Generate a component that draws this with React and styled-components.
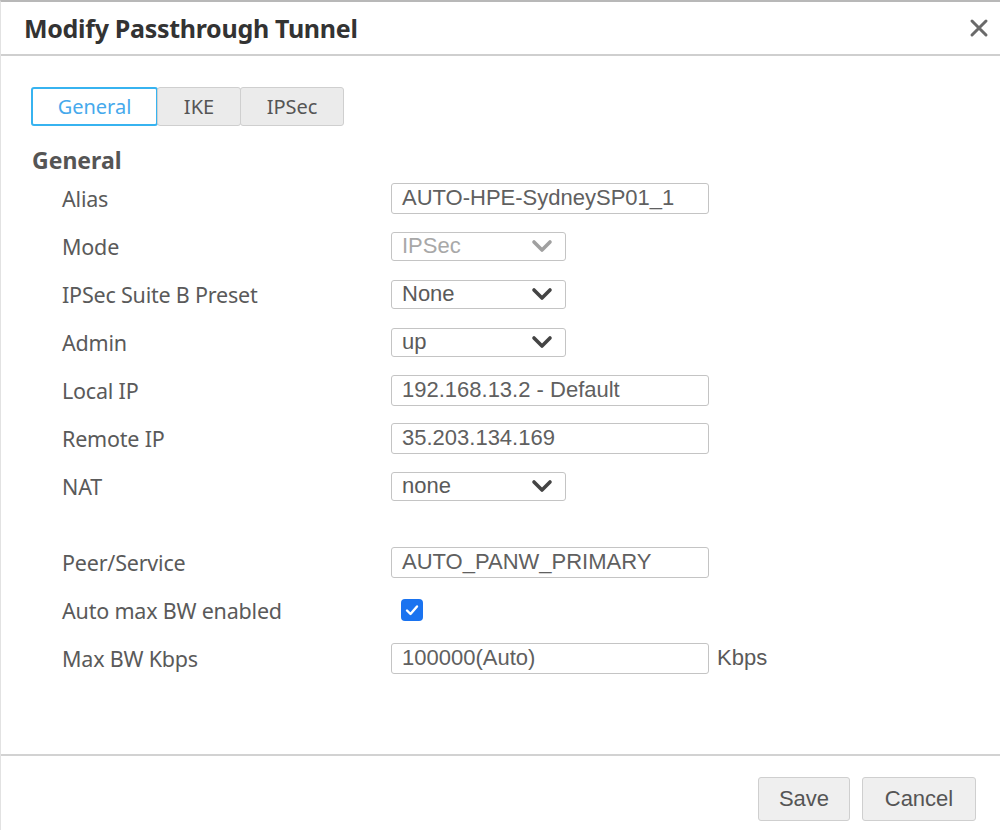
import React from 'react';
import styled, { createGlobalStyle } from 'styled-components';

const GlobalStyle = createGlobalStyle`
  html, body {
    margin: 0;
    padding: 0;
    background: #fff;
  }
`;

const Dialog = styled.div`
  width: 1000px;
  height: 830px;
  box-sizing: border-box;
  border-top: 2px solid #b8b8b8;
  border-left: 1px solid #e2e2e2;
  display: flex;
  flex-direction: column;
  font-family: 'Noto Sans', 'DejaVu Sans', sans-serif;
  color: #555;
`;

const Header = styled.div`
  height: 52px;
  display: flex;
  align-items: center;
  justify-content: space-between;
  padding: 0 9px 0 23px;
  border-bottom: 2px solid #cfcfcf;
`;

const Title = styled.h1`
  margin: 0;
  font-size: 25px;
  font-weight: bold;
  color: #333;
  letter-spacing: -0.3px;
`;

const Close = styled.button`
  border: 0;
  background: none;
  padding: 0;
  width: 24px;
  height: 24px;
  display: flex;
  align-items: center;
  justify-content: center;
  cursor: pointer;
`;

const Body = styled.div`
  flex: 1;
  padding: 31px 0 0 30px;
  border-bottom: 2px solid #d2d2d2;
`;

const Tabs = styled.div`
  display: flex;
`;

const Tab = styled.button`
  height: 39px;
  box-sizing: border-box;
  padding: 0;
  width: ${p => p.$w}px;
  font-family: 'Noto Sans', 'DejaVu Sans', sans-serif;
  font-size: 20px;
  background: ${p => (p.$active ? '#fff' : '#ebebeb')};
  color: ${p => (p.$active ? '#46a9ec' : '#555')};
  border: ${p => (p.$active ? '2px solid #37b3f0' : '1px solid #cfcfcf')};
  border-radius: 3px;
  margin-left: ${p => (p.$active ? 0 : -1)}px;
`;

const SectionTitle = styled.h2`
  margin: 20px 0 0 1px;
  font-size: 23px;
  line-height: 28px;
  font-weight: bold;
  color: #555;
`;

const Form = styled.div`
  padding-left: 31px;
  display: grid;
  grid-template-columns: 329px 1fr;
`;

const Label = styled.div`
  height: 48px;
  display: flex;
  align-items: center;
  font-size: 21.5px;
  color: #5a5a5a;
  letter-spacing: -0.2px;
`;

const Field = styled.div`
  display: flex;
  align-items: center;
  gap: 8px;
`;

const Spacer = styled.div`
  grid-column: 1 / -1;
  height: 28px;
`;

const TextInput = styled.div`
  width: 318px;
  height: 31px;
  box-sizing: border-box;
  border: 1px solid #c4c4c4;
  border-radius: 3px;
  padding: 0 10px;
  display: flex;
  align-items: center;
  font-family: 'Liberation Sans', Arial, sans-serif;
  font-size: 22px;
  color: #606060;
  white-space: nowrap;
`;

const Select = styled.div`
  width: 175px;
  height: 29px;
  box-sizing: border-box;
  border: 1px solid #c4c4c4;
  border-radius: 3px;
  padding: 0 12px 0 10px;
  display: flex;
  align-items: center;
  justify-content: space-between;
  font-family: 'Liberation Sans', Arial, sans-serif;
  font-size: 22px;
  color: ${p => (p.$disabled ? '#a8a8a8' : '#5a5a5a')};
`;

const Check = styled.div`
  margin-left: 10px;
  width: 22px;
  height: 22px;
  border-radius: 4px;
  background: #1a73f0;
  display: flex;
  align-items: center;
  justify-content: center;
`;

const Unit = styled.span`
  font-family: 'Liberation Sans', Arial, sans-serif;
  font-size: 22px;
  color: #5a5a5a;
`;

const Footer = styled.div`
  height: 74px;
  display: flex;
  justify-content: flex-end;
  align-items: flex-start;
  gap: 12px;
  padding: 21px 24px 0 0;
  box-sizing: border-box;
`;

const Button = styled.button`
  height: 44px;
  width: ${p => p.$w}px;
  background: #efefef;
  border: 1px solid #cfcfcf;
  border-radius: 3px;
  font-family: 'Liberation Sans', Arial, sans-serif;
  font-size: 22px;
  color: #555;
`;

const Chevron = ({ color }) => (
  <svg width="22" height="14" viewBox="0 0 22 14">
    <path d="M3 3 L11 11 L19 3" fill="none" stroke={color} strokeWidth="3.6" strokeLinecap="round" strokeLinejoin="round" />
  </svg>
);

const rows = [
  { label: 'Alias', type: 'text', value: 'AUTO-HPE-SydneySP01_1' },
  { label: 'Mode', type: 'select', value: 'IPSec', disabled: true },
  { label: 'IPSec Suite B Preset', type: 'select', value: 'None' },
  { label: 'Admin', type: 'select', value: 'up' },
  { label: 'Local IP', type: 'text', value: '192.168.13.2 - Default' },
  { label: 'Remote IP', type: 'text', value: '35.203.134.169' },
  { label: 'NAT', type: 'select', value: 'none' },
  { spacer: true },
  { label: 'Peer/Service', type: 'text', value: 'AUTO_PANW_PRIMARY' },
  { label: 'Auto max BW enabled', type: 'check' },
  { label: 'Max BW Kbps', type: 'text', value: '100000(Auto)', unit: 'Kbps' },
];

function renderField(r) {
  if (r.type === 'select') {
    return (
      <Select $disabled={r.disabled}>
        {r.value}
        <Chevron color={r.disabled ? '#a0a0a0' : '#444'} />
      </Select>
    );
  }
  if (r.type === 'check') {
    return (
      <Check>
        <svg width="16" height="16" viewBox="0 0 16 16">
          <path d="M3 8.5 L6.5 12 L13 4.5" fill="none" stroke="#fff" strokeWidth="2.4" strokeLinecap="round" strokeLinejoin="round" />
        </svg>
      </Check>
    );
  }
  return (
    <>
      <TextInput>{r.value}</TextInput>
      {r.unit && <Unit>{r.unit}</Unit>}
    </>
  );
}

export default function App() {
  return (
    <>
      <GlobalStyle />
      <Dialog>
        <Header>
          <Title>Modify Passthrough Tunnel</Title>
          <Close aria-label="close">
            <svg width="20" height="20" viewBox="0 0 20 20">
              <path d="M3 3 L17 17 M17 3 L3 17" stroke="#6a6a6a" strokeWidth="3" strokeLinecap="round" />
            </svg>
          </Close>
        </Header>
        <Body>
          <Tabs>
            <Tab $active $w={127}>General</Tab>
            <Tab $w={84}>IKE</Tab>
            <Tab $w={104}>IPSec</Tab>
          </Tabs>
          <SectionTitle>General</SectionTitle>
          <Form>
            {rows.map((r, i) =>
              r.spacer ? (
                <Spacer key={i} />
              ) : (
                <React.Fragment key={i}>
                  <Label>{r.label}</Label>
                  <Field>{renderField(r)}</Field>
                </React.Fragment>
              )
            )}
          </Form>
        </Body>
        <Footer>
          <Button $w={92}>Save</Button>
          <Button $w={114}>Cancel</Button>
        </Footer>
      </Dialog>
    </>
  );
}
